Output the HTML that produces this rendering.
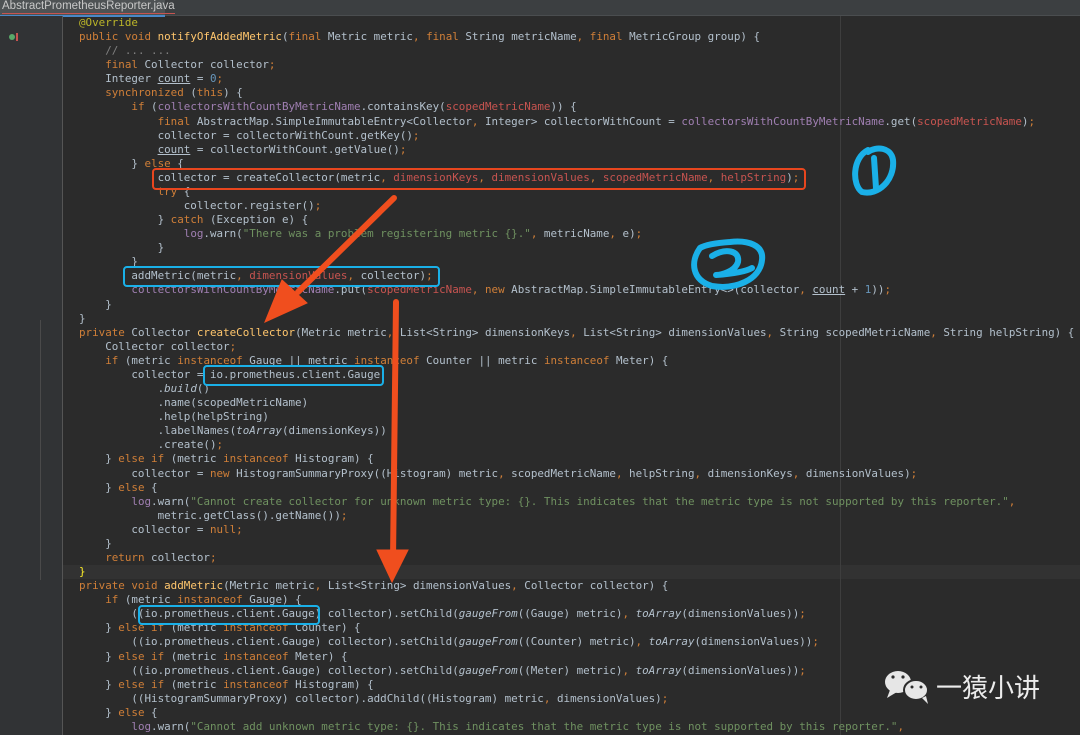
<!DOCTYPE html>
<html><head><meta charset="utf-8"><style>
body{margin:0;width:1080px;height:735px;overflow:hidden;background:#2b2b2b;position:relative;font-family:"Liberation Mono",monospace}
#tab{position:absolute;left:0;top:0;width:1080px;height:15px;background:#3c3f41;border-bottom:1px solid #4a4d4f}
#tab span{position:absolute;left:2px;top:0;font:11.5px "Liberation Sans",sans-serif;color:#c8c8c8;border-bottom:1px solid #c75450;line-height:13px}
#tab i{position:absolute;left:0;top:0;width:165px;height:15px;background:#4e5254;border-bottom:2px solid #4a88c7}
#gut{position:absolute;left:0;top:16px;width:62px;height:719px;background:#313335;border-right:1px solid #555}
#cur{position:absolute;left:63px;top:565px;width:1017px;height:14px;background:#323232}
#margin{position:absolute;left:840px;top:16px;width:1px;height:719px;background:#3e3e3e}
pre{position:absolute;left:79px;top:16px;margin:0;font-size:10.88px;line-height:14.08px;color:#b3c0cc;white-space:pre}
.k{color:#d07f38}.f{color:#a07fb2}.s{color:#6f9160}.m{color:#ffc66d}.n{color:#6897bb}.c{color:#808080}.a{color:#bbb529}.r{color:#c75450}.i{font-style:italic}.u{text-decoration:underline}
.box{position:absolute;border:2px solid;border-radius:4px}
</style></head><body>
<div id="tab"><i></i><span>AbstractPrometheusReporter.java</span></div>
<div id="gut"></div>
<div style="position:absolute;left:40px;top:320px;width:1px;height:260px;background:#4a4a4a"></div>
<div id="cur"></div>
<div id="margin"></div>
<div style="position:absolute;left:9px;top:34px;width:6px;height:6px;border-radius:50%;background:#59a869"></div>
<div style="position:absolute;left:16px;top:33px;width:2px;height:8px;background:#c75450"></div>
<pre><span class="a">@Override</span>
<span class="k">public void </span><span class="m">notifyOfAddedMetric</span>(<span class="k">final </span>Metric metric<span class="k">, final </span>String metricName<span class="k">, final </span>MetricGroup group) {
    <span class="c">// ... ...</span>
    <span class="k">final </span>Collector collector<span class="k">;</span>
    Integer <span class="u">count</span> = <span class="n">0</span><span class="k">;</span>
    <span class="k">synchronized </span>(<span class="k">this</span>) {
        <span class="k">if </span>(<span class="f">collectorsWithCountByMetricName</span>.containsKey(<span class="r">scopedMetricName</span>)) {
            <span class="k">final </span>AbstractMap.SimpleImmutableEntry&lt;Collector<span class="k">, </span>Integer&gt; collectorWithCount = <span class="f">collectorsWithCountByMetricName</span>.get(<span class="r">scopedMetricName</span>)<span class="k">;</span>
            collector = collectorWithCount.getKey()<span class="k">;</span>
            <span class="u">count</span> = collectorWithCount.getValue()<span class="k">;</span>
        } <span class="k">else </span>{
            collector = createCollector(metric<span class="k">, </span><span class="r">dimensionKeys</span><span class="k">, </span><span class="r">dimensionValues</span><span class="k">, </span><span class="r">scopedMetricName</span><span class="k">, </span><span class="r">helpString</span>)<span class="k">;</span>
            <span class="k">try </span>{
                collector.register()<span class="k">;</span>
            } <span class="k">catch </span>(Exception e) {
                <span class="f">log</span>.warn(<span class="s">"There was a problem registering metric {}."</span><span class="k">, </span>metricName<span class="k">, </span>e)<span class="k">;</span>
            }
        }
        addMetric(metric<span class="k">, </span><span class="r">dimensionValues</span><span class="k">, </span>collector)<span class="k">;</span>
        <span class="f">collectorsWithCountByMetricName</span>.put(<span class="r">scopedMetricName</span><span class="k">, new </span>AbstractMap.SimpleImmutableEntry&lt;&gt;(collector<span class="k">, </span><span class="u">count</span> + <span class="n">1</span>))<span class="k">;</span>
    }
}
<span class="k">private </span>Collector <span class="m">createCollector</span>(Metric metric<span class="k">, </span>List&lt;String&gt; dimensionKeys<span class="k">, </span>List&lt;String&gt; dimensionValues<span class="k">, </span>String scopedMetricName<span class="k">, </span>String helpString) {
    Collector collector<span class="k">;</span>
    <span class="k">if </span>(metric <span class="k">instanceof </span>Gauge || metric <span class="k">instanceof </span>Counter || metric <span class="k">instanceof </span>Meter) {
        collector = io.prometheus.client.Gauge
            .<span class="i">build</span>()
            .name(scopedMetricName)
            .help(helpString)
            .labelNames(<span class="i">toArray</span>(dimensionKeys))
            .create()<span class="k">;</span>
    } <span class="k">else if </span>(metric <span class="k">instanceof </span>Histogram) {
        collector = <span class="k">new </span>HistogramSummaryProxy((Histogram) metric<span class="k">, </span>scopedMetricName<span class="k">, </span>helpString<span class="k">, </span>dimensionKeys<span class="k">, </span>dimensionValues)<span class="k">;</span>
    } <span class="k">else </span>{
        <span class="f">log</span>.warn(<span class="s">"Cannot create collector for unknown metric type: {}. This indicates that the metric type is not supported by this reporter."</span><span class="k">,</span>
            metric.getClass().getName())<span class="k">;</span>
        collector = <span class="k">null;</span>
    }
    <span class="k">return </span>collector<span class="k">;</span>
<span style="color:#ffef28">}</span>
<span class="k">private void </span><span class="m">addMetric</span>(Metric metric<span class="k">, </span>List&lt;String&gt; dimensionValues<span class="k">, </span>Collector collector) {
    <span class="k">if </span>(metric <span class="k">instanceof </span>Gauge) {
        ((io.prometheus.client.Gauge) collector).setChild(<span class="i">gaugeFrom</span>((Gauge) metric)<span class="k">, </span><span class="i">toArray</span>(dimensionValues))<span class="k">;</span>
    } <span class="k">else if </span>(metric <span class="k">instanceof </span>Counter) {
        ((io.prometheus.client.Gauge) collector).setChild(<span class="i">gaugeFrom</span>((Counter) metric)<span class="k">, </span><span class="i">toArray</span>(dimensionValues))<span class="k">;</span>
    } <span class="k">else if </span>(metric <span class="k">instanceof </span>Meter) {
        ((io.prometheus.client.Gauge) collector).setChild(<span class="i">gaugeFrom</span>((Meter) metric)<span class="k">, </span><span class="i">toArray</span>(dimensionValues))<span class="k">;</span>
    } <span class="k">else if </span>(metric <span class="k">instanceof </span>Histogram) {
        ((HistogramSummaryProxy) collector).addChild((Histogram) metric<span class="k">, </span>dimensionValues)<span class="k">;</span>
    } <span class="k">else </span>{
        <span class="f">log</span>.warn(<span class="s">"Cannot add unknown metric type: {}. This indicates that the metric type is not supported by this reporter."</span><span class="k">,</span>
</pre>
<div class="box" style="left:152px;top:168px;width:650px;height:18px;border-color:#e8461e"></div>
<div class="box" style="left:123px;top:266px;width:313px;height:17px;border-color:#1ab0e8"></div>
<div class="box" style="left:203px;top:365px;width:177px;height:17px;border-color:#1ab0e8"></div>
<div class="box" style="left:138px;top:605px;width:178px;height:16px;border-color:#1ab0e8"></div>
<svg width="1080" height="735" style="position:absolute;left:0;top:0">
<g fill="none" stroke="#1ab0e8" stroke-width="6" stroke-linecap="round" stroke-linejoin="round">
<path d="M868 150 C852 158 852 185 862 192 C878 196 895 180 893 160 C891 147 876 146 868 152"/>
<path d="M874 158 L876 188"/>
<path d="M700 248 C690 262 692 280 712 286 C735 290 760 280 762 260 C764 245 748 240 730 242 C715 243 705 245 700 248"/>
<path d="M712 256 C725 248 740 250 738 262 C735 272 720 275 716 275 C730 274 745 272 752 268"/>
</g>
<g fill="#f04e1e" stroke="#f04e1e">
<path d="M394 198 L298 292" stroke-width="6" stroke-linecap="round"/>
<path d="M265 322 L282 280 L307 303 Z"/>
<path d="M396 302 L393 560" stroke-width="6" stroke-linecap="round"/>
<path d="M392 582 L377 550 L408 550 Z"/>
</g>
<g fill="#e6e6e6">
<ellipse cx="898" cy="682" rx="13" ry="11"/>
<path d="M890 690 L887 698 L897 692 Z"/>
<ellipse cx="916" cy="690" rx="12" ry="10" stroke="#2b2b2b" stroke-width="2"/>
<path d="M922 698 L928 704 L926 696 Z"/>
</g>
<g fill="#2b2b2b"><circle cx="893" cy="677" r="1.6"/><circle cx="903" cy="677" r="1.6"/><circle cx="912" cy="687" r="1.5"/><circle cx="921" cy="687" r="1.5"/></g>
<text x="936" y="697" font-family="'Liberation Sans','Noto Sans CJK SC',sans-serif" font-size="26" fill="#ececec">一猿小讲</text>
</svg>
</body></html>
